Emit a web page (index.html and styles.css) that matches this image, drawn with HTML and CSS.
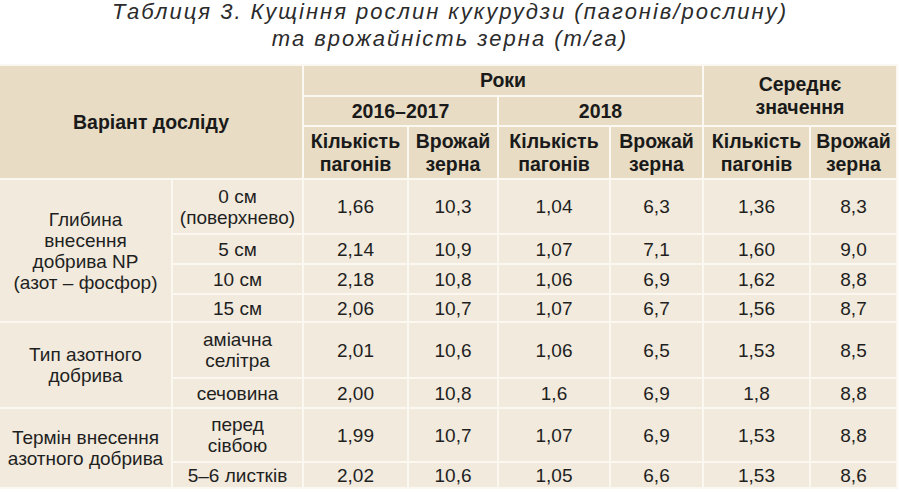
FILE: index.html
```html
<!DOCTYPE html>
<html lang="uk">
<head>
<meta charset="utf-8">
<title>Таблиця 3</title>
<link rel="stylesheet" href="styles.css">
</head>
<body>
<div class="page">
  <h1 class="caption">Таблиця 3. Кущіння рослин кукурудзи (пагонів/рослину)<br>та врожайність зерна (т/га)</h1>
  <table class="data">
    <colgroup>
      <col class="c-a"><col class="c-b"><col class="c-k1"><col class="c-v1"><col class="c-k2"><col class="c-v2"><col class="c-k3"><col class="c-v3">
    </colgroup>
    <thead>
      <tr class="h1">
        <th colspan="2" rowspan="3">Варіант досліду</th>
        <th colspan="4">Роки</th>
        <th colspan="2" rowspan="2">Середнє<br>значення</th>
      </tr>
      <tr class="h2">
        <th colspan="2">2016–2017</th>
        <th colspan="2">2018</th>
      </tr>
      <tr class="h3">
        <th>Кількість<br>пагонів</th>
        <th>Врожай<br>зерна</th>
        <th>Кількість<br>пагонів</th>
        <th>Врожай<br>зерна</th>
        <th>Кількість<br>пагонів</th>
        <th>Врожай<br>зерна</th>
      </tr>
    </thead>
    <tbody>
      <tr class="r-tall1">
        <td rowspan="4">Глибина<br>внесення<br>добрива NP<br>(азот – фосфор)</td>
        <td>0 см<br>(поверхнево)</td>
        <td>1,66</td><td>10,3</td><td>1,04</td><td>6,3</td><td>1,36</td><td>8,3</td>
      </tr>
      <tr class="r-s30">
        <td>5 см</td>
        <td>2,14</td><td>10,9</td><td>1,07</td><td>7,1</td><td>1,60</td><td>9,0</td>
      </tr>
      <tr class="r-s30">
        <td>10 см</td>
        <td>2,18</td><td>10,8</td><td>1,06</td><td>6,9</td><td>1,62</td><td>8,8</td>
      </tr>
      <tr class="r-s28">
        <td>15 см</td>
        <td>2,06</td><td>10,7</td><td>1,07</td><td>6,7</td><td>1,56</td><td>8,7</td>
      </tr>
      <tr class="r-tall2">
        <td rowspan="2">Тип азотного<br>добрива</td>
        <td>аміачна<br>селітра</td>
        <td>2,01</td><td>10,6</td><td>1,06</td><td>6,5</td><td>1,53</td><td>8,5</td>
      </tr>
      <tr class="r-s30">
        <td>сечовина</td>
        <td>2,00</td><td>10,8</td><td>1,6</td><td>6,9</td><td>1,8</td><td>8,8</td>
      </tr>
      <tr class="r-tall3">
        <td rowspan="2">Термін внесення<br>азотного добрива</td>
        <td>перед<br>сівбою</td>
        <td>1,99</td><td>10,7</td><td>1,07</td><td>6,9</td><td>1,53</td><td>8,8</td>
      </tr>
      <tr class="r-s26">
        <td>5–6 листків</td>
        <td>2,02</td><td>10,6</td><td>1,05</td><td>6,6</td><td>1,53</td><td>8,6</td>
      </tr>
    </tbody>
  </table>
</div>
</body>
</html>
```

FILE: styles.css
```css
html, body {
  margin: 0;
  padding: 0;
  background: #ffffff;
}

.page {
  width: 900px;
  font-family: "Liberation Sans", Arial, sans-serif;
  color: #1f1f1f;
}

.caption {
  margin: -2px 0 12px 0;
  font-size: 22px;
  line-height: 27px;
  font-style: italic;
  font-weight: normal;
  letter-spacing: 2px;
  text-align: center;
  color: #2b2b2b;
}

.data {
  width: 897px;
  border-collapse: collapse;
  table-layout: fixed;
}

.c-a { width: 172px; }
.c-b { width: 131px; }
.c-k1 { width: 105px; }
.c-v1 { width: 90px; }
.c-k2 { width: 112px; }
.c-v2 { width: 93px; }
.c-k3 { width: 107px; }
.c-v3 { width: 87px; }

.data th,
.data td {
  border: 2px solid #fbf8f1;
  padding: 0;
  text-align: center;
  vertical-align: middle;
}

.data th {
  background: #e8dcc4;
  font-size: 19.5px;
  font-weight: bold;
  line-height: 23px;
  color: #1a1a1a;
}

.data td {
  background: #f1eadd;
  font-size: 19px;
  line-height: 21px;
  color: #1f1f1f;
}

.data tr:first-child th:first-child,
.data tbody tr:first-child td:first-child,
.data tbody td[rowspan] {
  border-left: 0;
}

.h1 { height: 31px; }
.h2 { height: 30px; }
.h3 { height: 53px; }

.r-tall1 { height: 55px; }
.r-tall2 { height: 56px; }
.r-tall3 { height: 54px; }
.r-s30 { height: 30px; }
.r-s28 { height: 28px; }
.r-s26 { height: 26px; }
```
